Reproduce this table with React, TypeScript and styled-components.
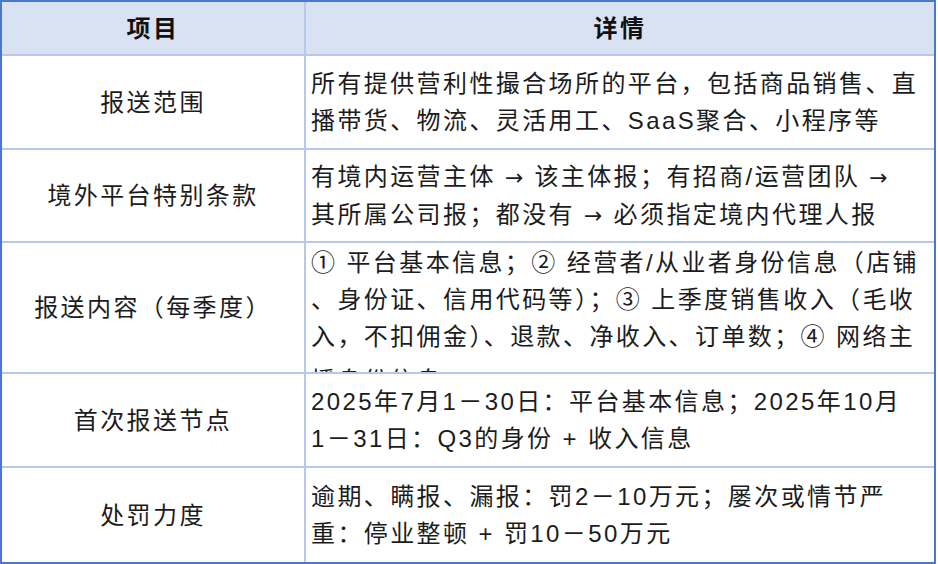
import React from "react";
import styled, { createGlobalStyle, css } from "styled-components";

const GlobalStyle = createGlobalStyle`
  html, body {
    margin: 0;
    padding: 0;
    background: #ffffff;
  }
  body {
    font-family: "Liberation Sans", "Noto Sans CJK SC", sans-serif;
    color: #1c1c1c;
  }
`;

const Table = styled.div`
  width: 936px;
  box-sizing: border-box;
  border: 2px solid #4a78cc;
  background: #b8c9e8;
  display: grid;
  grid-template-columns: 302px 1fr;
  grid-template-rows: 52px 92px 91px 129px 92px 94px;
  gap: 2px;
  font-size: 24px;
  letter-spacing: 2.4px;
  line-height: 37px;
`;

const HeaderCell = styled.div`
  background: #d9e2f3;
  display: flex;
  align-items: center;
  justify-content: center;
  font-weight: 700;
  color: #111111;
`;

const LabelCell = styled.div`
  background: #ffffff;
  display: flex;
  align-items: center;
  justify-content: center;
  text-align: center;
`;

const DetailCell = styled.div<{ $clip?: boolean }>`
  background: #ffffff;
  display: flex;
  flex-direction: column;
  justify-content: center;
  padding: 0 0 0 5px;
  overflow: hidden;
  ${(p) =>
    p.$clip &&
    css`
      justify-content: flex-start;
      padding-top: 1px;
    `}
`;

const Lines = styled.div<{ $clip?: boolean }>`
  overflow: hidden;
  ${(p) =>
    p.$clip &&
    css`
      max-height: 128px;
    `}
`;

const Line = styled.span<{ $tail?: boolean }>`
  display: block;
  white-space: nowrap;
  ${(p) =>
    p.$tail &&
    css`
      margin-top: 7px;
    `}
`;

const Arrow = styled.span`
  font-family: "DejaVu Sans", sans-serif;
  font-size: 22px;
  letter-spacing: 0;
  margin-right: 2px;
`;

type Row = { label: string; lines: string[]; clip?: boolean };

const rows: Row[] = [
  {
    label: "报送范围",
    lines: [
      "所有提供营利性撮合场所的平台，包括商品销售、直",
      "播带货、物流、灵活用工、SaaS聚合、小程序等",
    ],
  },
  {
    label: "境外平台特别条款",
    lines: [
      "有境内运营主体 → 该主体报；有招商/运营团队 →",
      "其所属公司报；都没有 → 必须指定境内代理人报",
    ],
  },
  {
    label: "报送内容（每季度）",
    lines: [
      "① 平台基本信息；② 经营者/从业者身份信息（店铺",
      "、身份证、信用代码等）；③ 上季度销售收入（毛收",
      "入，不扣佣金）、退款、净收入、订单数；④ 网络主",
      "播身份信息",
    ],
    clip: true,
  },
  {
    label: "首次报送节点",
    lines: ["2025年7月1－30日：平台基本信息；2025年10月", "1－31日：Q3的身份 + 收入信息"],
  },
  {
    label: "处罚力度",
    lines: ["逾期、瞒报、漏报：罚2－10万元；屡次或情节严", "重：停业整顿 + 罚10－50万元"],
  },
];

function renderLine(text: string) {
  const parts = text.split("→");
  return parts.map((p, i) => (
    <React.Fragment key={i}>
      {p}
      {i < parts.length - 1 && <Arrow>→</Arrow>}
    </React.Fragment>
  ));
}

export default function App() {
  return (
    <>
      <GlobalStyle />
      <Table>
        <HeaderCell>项目</HeaderCell>
        <HeaderCell>详情</HeaderCell>
        {rows.map((r) => (
          <React.Fragment key={r.label}>
            <LabelCell>{r.label}</LabelCell>
            <DetailCell $clip={r.clip}>
              <Lines $clip={r.clip}>
                {r.lines.map((l, i) => (
                  <Line key={i} $tail={r.clip && i === 3}>
                    {renderLine(l)}
                  </Line>
                ))}
              </Lines>
            </DetailCell>
          </React.Fragment>
        ))}
      </Table>
    </>
  );
}
